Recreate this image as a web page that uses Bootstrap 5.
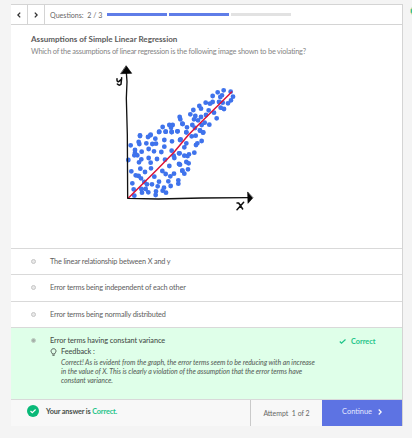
<!DOCTYPE html>
<html lang="en">
<head>
<meta charset="utf-8">
<meta name="viewport" content="width=device-width, initial-scale=1">
<title>Quiz</title>
<link href="https://cdn.jsdelivr.net/npm/bootstrap@5.3.0/dist/css/bootstrap.min.css" rel="stylesheet">
<style>
body{background:#f4f4f4;font-family:Lato,sans-serif;font-size:7.3px;line-height:9px;color:#666;height:438px;overflow:hidden}
svg{display:block;flex:none}
.quiz{width:392px;height:422px;margin:4px 0 0 11px;border-top:1px solid #d4d4d4;border-right:1px solid #d4d4d4}
.quiz-head{height:20px;border-bottom:1px solid #d4d4d4}
.step{width:17px;border-right:1px solid #d4d4d4}
.q-count{padding:1px 0 0 5px;width:62px;white-space:pre;font-size:7.1px}
.bar{width:59.5px;height:3px;background:#5f7de8;margin-right:2.7px}
.bar.todo{background:#e2e2e2}
.question{height:223px;padding:9px 20px 0}
.q-title{font-size:8.05px;line-height:10px;font-weight:700;color:#5c5c5c}
.q-text{font-size:7.4px;line-height:10px;letter-spacing:-.215px;color:#858585;margin-top:3px}
.plot{margin:8px 0 0 74px}
.option{border-top:1px solid #d9d9d9;height:26px;padding-left:20px;color:#5e5e5e;letter-spacing:-.15px}
.option.tall{height:27px;padding-bottom:2px}
.dot{width:5px;height:5px;border:1px solid #c6c6c6;border-radius:50%;background:#e8e8e8;margin-right:14px;flex:none}
.option.right{height:72px;background:#dfffe9;padding-top:8px;letter-spacing:0}
.right .dot{background:#a5b0a8;border-color:#bfd0c4;margin-top:2px}
.answer{color:#48504b;font-size:7.3px;font-weight:500;letter-spacing:-.06px}
.fb-label{margin-top:2px}
.fb-text{font-size:6.92px;line-height:9px;letter-spacing:-.045px;font-style:italic;color:#5c6660;margin:2px 0 0 11px;white-space:nowrap}
.ok{color:#1cc488;font-weight:700}
.verdict{width:63px;margin-top:1px}
.quiz-foot{height:27px;border-top:1px solid #d9d9d9;background:#f8f8f8}
.your-answer{margin-left:7px;font-weight:700;letter-spacing:-.15px}
.attempt{width:72px;border-left:1px solid #cacaca;white-space:pre;font-size:6.95px}
.next{width:80px;background:#5d73e3;color:#e4e9ff;border:0;border-radius:0;font-size:7.4px;line-height:9px;padding:0 0 3px}
.next:hover{background:#5068da;color:#fff}
.next-icon{margin-left:6px}
.outer-tip{position:absolute;left:410px;top:6px;width:10px;height:10px;border-radius:50%;background:#20b99a;border:1px solid #d9dd90}
</style>
<script src="https://cdn.jsdelivr.net/npm/bootstrap@5.3.0/dist/js/bootstrap.bundle.min.js"></script>
</head>
<body>
<main class="quiz bg-white d-flex flex-column">
  <header class="quiz-head d-flex align-items-stretch flex-shrink-0">
    <div class="step d-flex align-items-center justify-content-center"><svg width="4" height="6" viewBox="0 0 4 6"><path d="M3.2.6.9 3l2.3 2.4" fill="none" stroke="#333" stroke-width="1.3"/></svg></div>
    <div class="step d-flex align-items-center justify-content-center"><svg width="4" height="6" viewBox="0 0 4 6"><path d="M.8.6 3.1 3 .8 5.4" fill="none" stroke="#333" stroke-width="1.3"/></svg></div>
    <div class="d-flex align-items-center"><span class="q-count">Questions:  2 / 3</span>
    <span class="bar"></span><span class="bar"></span><span class="bar todo"></span></div>
  </header>
  <section class="question flex-shrink-0">
    <div class="q-title">Assumptions of Simple Linear Regression</div>
    <div class="q-text">Which of the assumptions of linear regression is the following image shown to be violating?</div>
    <svg class="plot" width="155" height="150" viewBox="0 0 465 450" fill="none" stroke-linecap="round" stroke-linejoin="round">
      <g transform="translate(0 -15)">
      <g stroke="#3f73ec" stroke-width="14.5">
        <path d="M105 226h0M136 226h0M163 215h0M173 201h0M182 215h0M193 195h0M203 195h0M198 203h0M200 216h0M217 214h0M224 171h0M226 178h0M233 192h0"/>
        <path transform="translate(225 0)" d="M131 91h0M113 97h0M152 95h0M98 108h0M126 106h0M121 111h0M159 110h0M153 121h0M77 128h0M98 126h0M90 131h0M117 126h0M128 128h0M144 130h0M58 138h0M63 146h0M40 150h0M122 143h0M132 147h0M31 163h0M86 151h0M102 158h0M46 168h0M42 178h0M78 165h0M63 171h0M110 175h0M54 181h0M74 188h0M65 195h0M88 194h0M7 191h0M37 195h0M21 202h0M45 204h0M60 211h0M70 217h0M19 217h0"/>
        <path transform="translate(0 210)" d="M162 6h0M182 5h0M200 6h0M218 4h0M105 18h0M137 14h0M129 21h0M151 26h0M178 30h0M77 46h0M101 36h0M124 40h0M142 42h0M153 41h0M103 42h0M178 50h0M201 34h0M225 30h0M90 60h0M90 68h0M110 65h0M131 57h0M147 64h0M169 66h0M97 76h0M88 76h0M200 62h0M70 90h0M109 88h0M102 97h0M131 84h0M137 98h0M156 87h0M180 89h0M206 77h0M208 84h0M224 70h0M222 102h0M193 108h0M79 124h0M106 116h0M138 115h0M120 126h0M172 123h0M232 122h0M92 136h0M101 138h0M108 145h0M182 132h0M196 139h0M207 131h0M118 156h0M126 163h0M141 163h0M162 155h0M158 169h0M190 154h0M220 151h0M220 161h0M82 160h0M86 178h0M109 177h0M122 177h0M130 187h0M111 188h0M153 184h0M177 173h0M173 182h0M183 188h0M197 168h0M152 195h0M88 197h0M148 140h0"/>
        <path transform="translate(225 210)" d="M69 8h0M60 2h0M47 17h0M35 19h0M65 33h0M52 40h0M48 45h0M19 7h0M19 40h0M13 52h0M43 68h0M27 73h0M23 78h0M13 77h0M19 96h0M26 100h0M24 118h0M7 122h0M13 131h0M-3 70h0M0 104h0M2 28h0"/>
      </g>
      <path d="M71 413 155 330 207 277 250 225 285 190 380 96" stroke="#dc1439" stroke-width="4.5"/>
      <path d="M64 37 66 65 64 115 67 225 68 415 160 417 290 414 432 413" stroke="#111" stroke-width="4"/>
      <path d="M64 18 80 40 48 41ZM443 414 429 430 428 397Z" fill="#050505" stroke="#050505" stroke-width="2"/>
      <path d="M36 56Q35 66 41 65L48 59M50 53 48 73Q43 78 37 72" stroke="#111" stroke-width="4.5"/>
      <path d="M396 429 401 429 413 447M416 427 396 449" stroke="#111" stroke-width="4.5"/>
      </g>
    </svg>
  </section>
  <div class="option d-flex align-items-center flex-shrink-0"><span class="dot"></span>The linear relationship between X and y</div>
  <div class="option tall d-flex align-items-center flex-shrink-0"><span class="dot"></span>Error terms being independent of each other</div>
  <div class="option d-flex align-items-center flex-shrink-0"><span class="dot"></span>Error terms being normally distributed</div>
  <div class="option right d-flex align-items-start flex-shrink-0"><span class="dot"></span>
    <div class="flex-grow-1 answer">
      <div>Error terms having constant variance</div>
      <div class="fb-label d-flex align-items-center"><svg width="11" height="8" viewBox="0 0 11 8"><path d="M2.2 5.2C.3 3.8.9.8 3.5.7S6.800 3.800 4.800 5.200V6H2.200ZM2.400 7.300H4.600" fill="none" stroke="#48504b" stroke-width=".9"/></svg>Feedback :</div>
      <div class="fb-text">Correct! As is evident from the graph, the error terms seem to be reducing with an increase<br>in the value of X. This is clearly a violation of the assumption that the error terms have<br>constant variance.</div>
    </div>
    <div class="verdict ok d-flex align-items-center"><svg width="12" height="7" viewBox="0 0 12 7"><path d="m.8 3.500 1.700 1.700L6.500 1.500" fill="none" stroke="#1cc488" stroke-width="1.200"/></svg>Correct</div>
  </div>
  <footer class="quiz-foot d-flex align-items-stretch flex-shrink-0">
    <div class="flex-grow-1 d-flex align-items-center ps-3 pb-1 answer"><svg width="12" height="12" viewBox="0 0 12 12"><circle cx="6" cy="6" r="6" fill="#09b978"/><path d="m3.500 6 1.800 1.600L8.600 4.500" fill="none" stroke="#fff" stroke-width="1.200"/></svg><span class="your-answer">Your answer is <span class="ok">Correct.</span></span></div>
    <div class="attempt d-flex align-items-center justify-content-center">Attempt  1 of 2</div>
    <button class="next btn d-flex align-items-center justify-content-center" type="button">Continue<svg class="next-icon" width="4" height="6" viewBox="0 0 4 6"><path d="M.7.5 3.200 3 .7 5.500" fill="none" stroke="#fff" stroke-width="1.200"/></svg></button>
  </footer>
</main>
<div class="outer-tip"></div>
</body>
</html>
